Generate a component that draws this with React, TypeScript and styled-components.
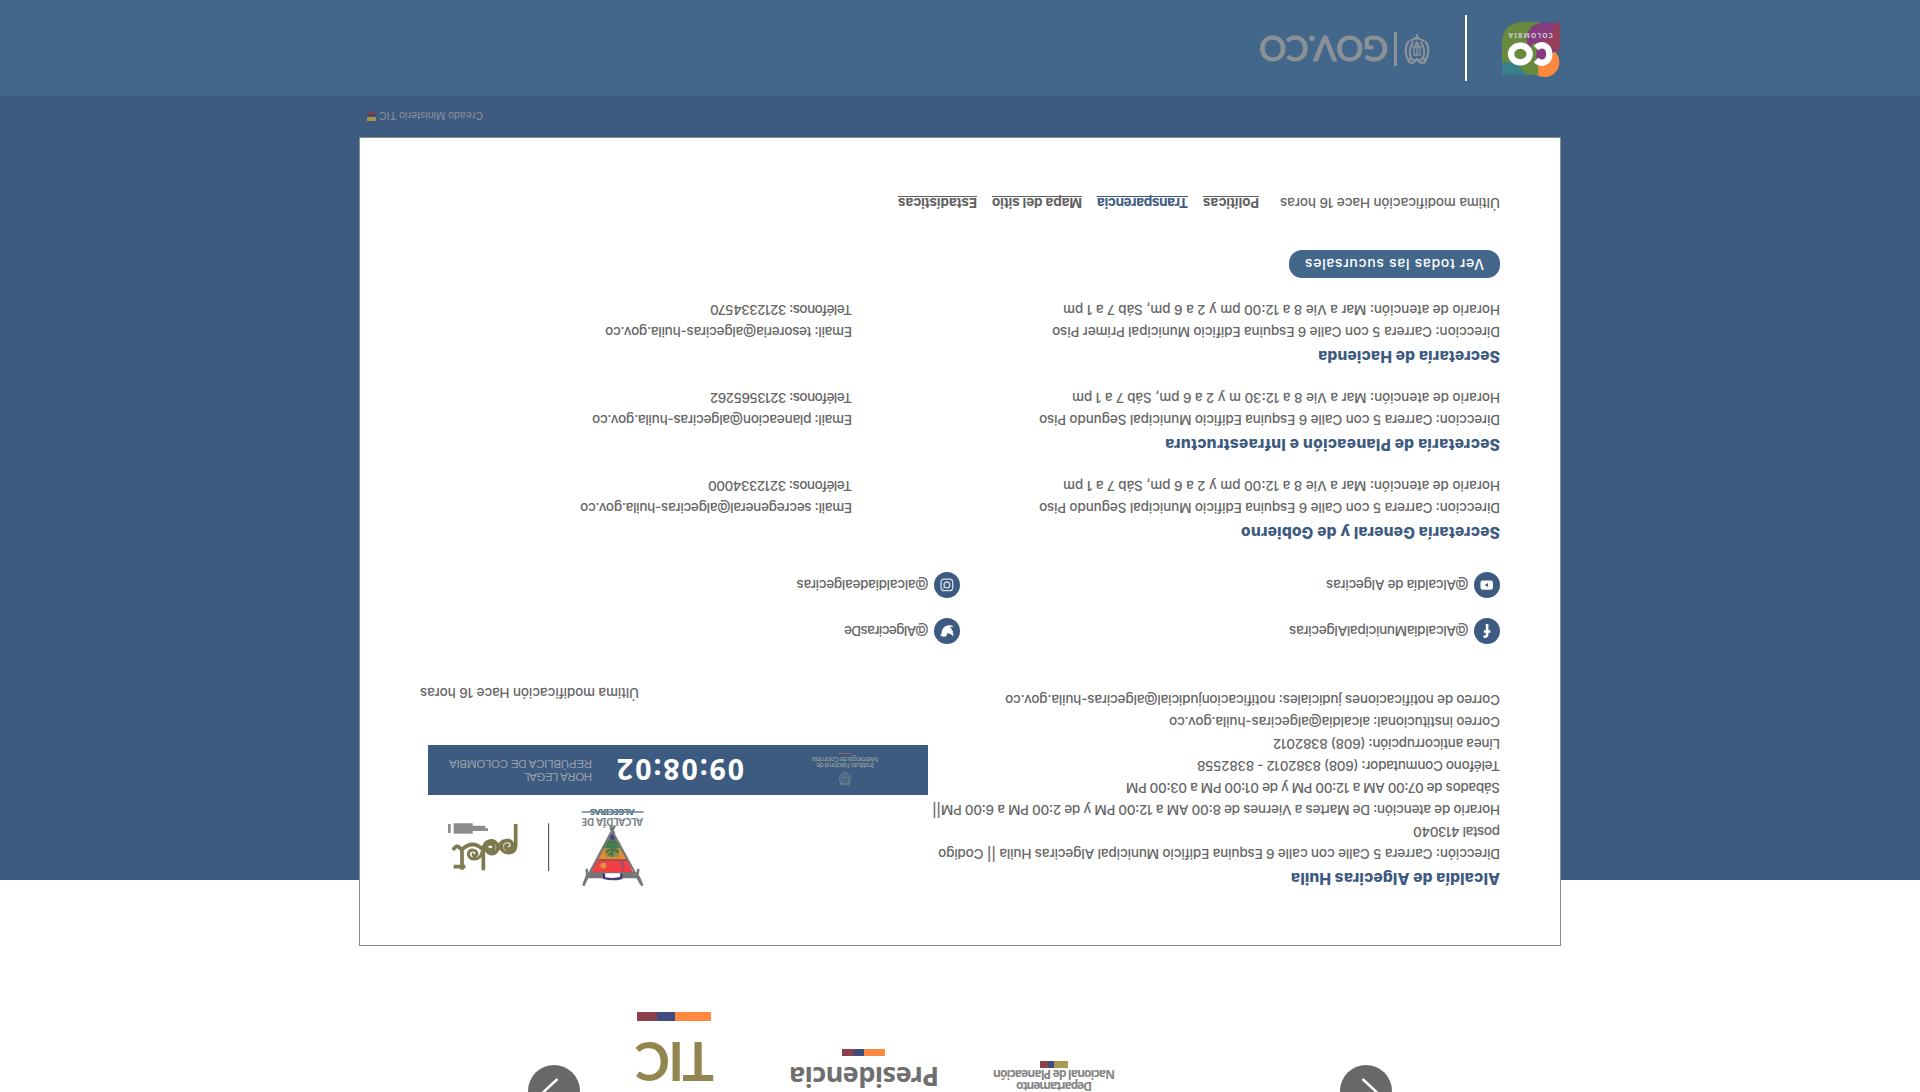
import React, { useLayoutEffect, useRef, useState } from "react";
import styled, { createGlobalStyle } from "styled-components";

const navy = "#3d5a80";
const steel = "#43678b";

const GlobalStyle = createGlobalStyle`
  body { margin: 0; background: #fff; }
  * { box-sizing: border-box; }
`;

const Page = styled.div`
  width: 1920px;
  height: 1092px;
  overflow: hidden;
  display: flex;
  flex-direction: column;
  background: #fff;
  color: #666;
  font: 500 13.5px/21px Inter, "Noto Sans", sans-serif;
  transform: rotate(180deg);
`;

/* ---------- text that keeps a fixed measure ---------- */

const FitSpan = styled.span`
  display: inline-block;
  white-space: nowrap;
  flex: none;
`;

function Fit({ w, children }: { w: number; children: string }) {
  const ref = useRef<HTMLSpanElement>(null);
  const [spacing, setSpacing] = useState(0);
  useLayoutEffect(() => {
    const el = ref.current;
    if (!el) return;
    el.style.letterSpacing = "0px";
    const natural = parseFloat(getComputedStyle(el).width);
    const s = (w - natural) / (children.length - 1);
    el.style.letterSpacing = s + "px";
    setSpacing(s);
  }, [w, children]);
  return (
    <FitSpan ref={ref} style={{ letterSpacing: spacing, marginRight: -spacing }}>
      {children}
    </FitSpan>
  );
}

/* ---------- partners carousel ---------- */

const Partners = styled.section`
  flex: none;
  height: 146px;
  display: flex;
  align-items: flex-start;
  padding-left: 528px;
`;

const ArrowButton = styled.button`
  flex: none;
  width: 52px;
  height: 52px;
  margin: -25px 0 0;
  padding: 0;
  border: 0;
  border-radius: 50%;
  background: #686868;
`;

const Partner = styled.div<{ $left: number; $w: number }>`
  flex: none;
  width: ${(p) => p.$w}px;
  margin-left: ${(p) => p.$left}px;
  display: flex;
  flex-direction: column;
  align-items: center;
`;

const DnpName = styled.div`
  font: 700 12px/12px "Noto Sans", sans-serif;
  color: #858585;
  text-align: center;
  height: 24px;
`;

const PresidenciaName = styled.div`
  font: 700 27px/29px "Noto Sans", sans-serif;
  color: #6f6f6f;
  height: 36px;
`;

const TicName = styled.div`
  font: 700 53px/60px Lato, sans-serif;
  color: #92854f;
  height: 71px;
`;

const Flag = styled.div<{ $w: number; $h: number; $first?: string }>`
  width: ${(p) => p.$w}px;
  height: ${(p) => p.$h}px;
  background: linear-gradient(
    90deg,
    ${(p) => p.$first ?? "#fe8840"} 49%,
    #404b80 49% 73%,
    #8a414c 73%
  );
`;

/* ---------- footer ---------- */

const FooterZone = styled.footer`
  flex: none;
  height: 850px;
  display: flex;
  flex-direction: column;
  align-items: center;
  background: linear-gradient(#fff 66px, ${navy} 66px);
`;

const Card = styled.div`
  width: 1202px;
  height: 809px;
  padding: 45px 60px 0;
  border: 1px solid #8b8b8b;
  background: #fff;
`;

const TopGrid = styled.div`
  display: grid;
  grid-template-columns: 572px 500px;
  align-items: start;
`;

const Info = styled.div`
  padding-top: 12px;
`;

const Title = styled.h3`
  margin: 0 0 2px;
  height: 22px;
  font-size: 15.5px;
  line-height: 20px;
  font-weight: 800;
  color: ${navy};
`;

const Line = styled.p`
  margin: 0;
  height: 22px;
`;

const Brands = styled.div`
  display: flex;
  gap: 10px;
  height: 100px;
  padding-left: 268px;
`;

const AlcaldiaSvg = styled.svg`
  flex: none;
  width: 90px;
  height: 100px;
`;

const PdetSvg = styled.svg`
  flex: none;
  width: 120px;
  height: 65px;
  margin-top: 20px;
`;

const LegalTime = styled.div`
  display: flex;
  align-items: center;
  height: 50px;
  margin-top: 5px;
  padding-left: 50px;
  background: ${navy};
`;

const Institute = styled.div`
  width: 66px;
  height: 32px;
  display: flex;
  flex-direction: column;
  align-items: center;
  font: 7px/6px "Noto Sans", sans-serif;
  color: #98a39c;
`;

const InstituteShield = styled.svg`
  width: 14px;
  height: 15px;
  margin-bottom: 3px;
  flex: none;
`;

const InstituteMark = styled.div`
  flex: none;
  width: 14px;
  height: 1px;
  margin-top: 2px;
  background: #8a6470;
`;

const Clock = styled.div`
  width: 127px;
  margin-left: 68px;
  font: 700 28.5px/34px "Noto Sans", sans-serif;
  color: #fff;
`;

const ClockLabel = styled.div`
  margin-left: 25px;
  font: 11.5px/13px "Liberation Sans", sans-serif;
  color: #9ba1aa;
  display: flex;
  flex-direction: column;
`;

const Updated = styled.p`
  margin: 42px 0 0 289px;
  height: 22px;
`;

const Socials = styled.div`
  display: grid;
  grid-template-columns: 540px auto;
  row-gap: 20px;
  margin: 37px 0 30px;
`;

const Social = styled.div`
  display: flex;
  align-items: center;
  gap: 5.5px;
  height: 26px;
`;

const SocialIcon = styled.svg`
  width: 26px;
  height: 26px;
`;

const Office = styled.section`
  margin-bottom: 20px;
`;

const OfficeGrid = styled.div`
  display: grid;
  grid-template-columns: 648px auto;
`;

const BranchesButton = styled.button`
  display: block;
  height: 28px;
  width: 211px;
  padding: 0 0 0 16px;
  border: 0;
  border-radius: 13px;
  background: ${steel};
  color: #fff;
  text-align: left;
  font: 500 14px/28px Inter, sans-serif;
`;

const Links = styled.div`
  display: flex;
  margin-top: 37px;
`;

const FooterLink = styled.a<{ $gap: number; $active?: boolean }>`
  margin-left: ${(p) => p.$gap}px;
  height: 17px;
  font-weight: 700;
  border-bottom: 1px solid currentColor;
  color: ${(p) => (p.$active ? navy : "#626262")};
`;

const Credit = styled.div`
  display: flex;
  align-items: center;
  width: 1202px;
  height: 41px;
  padding: 0 8px 0 0;
  justify-content: flex-end;
  gap: 3px;
  font: 10.5px/14px "Liberation Sans", sans-serif;
  color: #8d929a;
`;

/* ---------- government bar ---------- */

const GovBar = styled.div`
  flex: none;
  height: 96px;
  display: flex;
  align-items: center;
  padding-left: 360px;
  background: ${steel};
`;

const CoLogo = styled.svg`
  width: 58px;
  height: 55px;
  margin-bottom: 3px;
`;

const Rule = styled.div`
  width: 1.500px;
  height: 66px;
  margin: 0 35px;
  background: #fff;
`;

const GovShield = styled.svg`
  width: 26px;
  height: 31px;
  margin-bottom: 3px;
`;

const GovRule = styled.div`
  width: 3px;
  height: 34px;
  margin: 0 6.500px 3px 7px;
  background: #8c9197;
`;

const GovName = styled.div`
  font: 500 34px/40px Lato, sans-serif;
  -webkit-text-stroke: 1px #8c9197;
  color: #8c9197;
  padding-bottom: 3px;
`;

function Shield({ color }: { color: string }) {
  return (
    <g fill="none" stroke={color} strokeWidth="2.200">
      <path d="M6 3C1 8 0 18 5 24M20 3c5 5 6 15 1 21" />
      <path d="M8 5C5 10 5 17 9 23M18 5c3 5 3 12-1 18" />
      <path d="M10 10c0 6 0 9 3 13 3-4 3-7 3-13zM13 9v14M8 18h10" strokeWidth="1.400" />
      <path d="M4 4q4-4 7 0 2 3 4 0 3-4 7 0M6 24q7 5 14 0M10 27h6M13 27v4" />
      <path d="M3 6q5 1 8-2M23 6q-5 1-8-2M9 2l4 4 4-4" />
    </g>
  );
}

function Alcaldia() {
  return (
    <AlcaldiaSvg viewBox="0 0 270 300">
      <g transform="rotate(180 135 150)">
        <path d="M127 92 98 148H154Z" fill="#3f8150" />
        <path d="M127 92 114 124H138Z" fill="#69739a" />
        <path d="M98 145H154L172 181H80Z" fill="#df8c35" />
        <path d="M104 146H149L145 170H110Z" fill="#87904a" />
        <path d="M80 181H173L190 219H61Z" fill="#f33e43" />
        <path d="M61 217H192L196 233H55Z" fill="#747078" />
        <circle cx="128" cy="111" r="8" fill="#3b4583" />
        <path d="M104 133q23-18 46 0M108 158q19-22 37 0M127 136v36M115 166l24-20" stroke="#4c7346" strokeWidth="6" fill="none" />
        <circle cx="100" cy="197" r="11" fill="#f28a3f" stroke="#bb5440" strokeWidth="3" />
        <path d="M150 184q19 10 5 27" stroke="#865476" strokeWidth="5" fill="none" />
        <path d="M83 180H172" stroke="#873946" strokeWidth="4" />
        <path d="M121 76 133 101M135 76 42 251M121 84 213 252M50 221H206M47 231H207" stroke="#77777a" strokeWidth="7" fill="none" />
        <path d="M40 257l11-28M217 257l-12-28M50 207l3 26M205 207l-4 26" stroke="#77777a" strokeWidth="8" />
        <path d="M102 220v14q25 7 52 0v-14" fill="#fff" stroke="#403d76" strokeWidth="7" />
      </g>
      <text x="51" y="246" textLength="184" fontFamily="Noto Sans, sans-serif" fontSize="30" fontWeight="700" fill="#7e858b">ALCALDÍA DE</text>
      <text x="76" y="274" textLength="134" fontFamily="Noto Sans, sans-serif" fontSize="27" fontWeight="800" fill="#526f83">ALGECIRAS</text>
      <path d="M49 264h186" stroke="#6e8190" strokeWidth="4" />
    </AlcaldiaSvg>
  );
}

function Pdet() {
  return (
    <PdetSvg viewBox="0 0 360 195">
      <g transform="rotate(180 180 97.5)">
        <g fill="none" stroke="#7d7a50" strokeWidth="11">
          <path d="M227 27V90Q227 113 204 113C178 112 176 78 203 76 223 77 220 105 203 102 190 98 198 86 206 92" />
          <path d="M130 166V105C128 75 168 67 174 95 174 122 140 122 138 99 139 82 162 82 162 98 160 110 147 108 150 98" />
          <path d="M178 105q-3-17 13-28" />
          <path d="M39 105Q52 82 66 107V164M41 155H76M66 103Q100 74 127 103" />
          <path d="M127 108C122 139 86 138 85 117 88 99 112 104 111 117 107 128 94 121 101 115" strokeWidth="9" />
        </g>
      </g>
      <path d="M34 27v143" stroke="#3c3c3c" strokeWidth="3" />
      <g stroke="#8c8c8c" strokeWidth="8">
        <path d="M216 151H319M224 159H319M262 166H319M332 141v27" />
        <path d="M262 143H319" />
      </g>
    </PdetSvg>
  );
}

function SocialMark({ kind }: { kind: "facebook" | "twitter" | "youtube" | "instagram" }) {
  return (
    <SocialIcon viewBox="0 0 26 26">
      <circle cx="13" cy="13" r="13" fill={navy} />
      {kind === "facebook" && (
        <path fill="#fff" d="M11.6 20v-6.2H9.6v-2.6h2V9.4c0-2.2 1.2-3.3 3.2-3.3l1.7.1v2.3h-1.1c-1 0-1.2.5-1.2 1.2v1.5h2.2l-.3 2.6h-1.9V20z" />
      )}
      {kind === "twitter" && (
        <path fill="#fff" d="M20 8.4c-.5.3-1 .4-1.6.5.6-.4 1-.9 1.2-1.5-.5.3-1.1.5-1.8.7a2.900 2.900 0 0 0-4.900 2.600c-2.400-.1-4.500-1.200-5.900-3-.8 1.300-.4 3 .9 3.900-.5 0-.9-.2-1.300-.4 0 1.400 1 2.600 2.300 2.900-.4.1-.9.1-1.300 0 .4 1.200 1.500 2 2.700 2A5.900 5.900 0 0 1 6 17.400c5.200 3.300 12.600.4 12.500-7.500.6-.4 1.100-.9 1.500-1.500z" />
      )}
      {kind === "youtube" && (
        <>
          <rect x="7" y="8.300" width="12.500" height="9.300" rx="2.200" fill="#fff" />
          <path d="M12 11v4l3.400-2z" fill={navy} />
        </>
      )}
      {kind === "instagram" && (
        <g fill="none" stroke="#d3dae3" strokeWidth="1.300">
          <rect x="7.300" y="7.300" width="11.600" height="11.600" rx="3" />
          <circle cx="13.100" cy="13.100" r="2.900" />
          <path d="M16.200 9.800h.8" />
        </g>
      )}
    </SocialIcon>
  );
}

type Entry = [string, number];

const info: Entry[] = [
  ["Dirección: Carrera 5 Calle con calle 6 Esquina Edificio Municipal Algeciras Huila || Codigo", 562],
  ["postal 413040", 87],
  ["Horario de atención: De Martes a Viernes de 8:00 AM a 12:00 PM y de 2:00 PM a 6:00 PM||", 568],
  ["Sábados de 07:00 AM a 12:00 PM y de 01:00 PM a 03:00 PM", 374],
  ["Teléfono Conmutador: (608) 8382012 - 8382558", 303],
  ["Línea anticorrupción: (608) 8382012", 227],
  ["Correo institucional: alcaldia@algeciras-huila.gov.co", 331],
  ["Correo de notificaciones judiciales: notificacionjudicial@algeciras-huila.gov.co", 495],
];

const offices: { title: Entry; cells: Entry[] }[] = [
  {
    title: ["Secretaría General y de Gobierno", 259],
    cells: [
      ["Direccion: Carrera 5 con Calle 6 Esquina Edificio Municipal Segundo Piso", 461],
      ["Email: secregeneral@algeciras-huila.gov.co", 272],
      ["Horario de atención: Mar a Vie 8 a 12:00 pm y 2 a 6 pm, Sáb 7 a 1 pm", 437],
      ["Teléfonos: 3212334000", 144],
    ],
  },
  {
    title: ["Secretaría de Planeación e Infraestructura", 335],
    cells: [
      ["Direccion: Carrera 5 con Calle 6 Esquina Edificio Municipal Segundo Piso", 461],
      ["Email: planeacion@algeciras-huila.gov.co", 260],
      ["Horario de atención: Mar a Vie 8 a 12:30 m y 2 a 6 pm, Sáb 7 a 1 pm", 428],
      ["Teléfonos: 3213565262", 142],
    ],
  },
  {
    title: ["Secretaría de Hacienda", 182],
    cells: [
      ["Direccion: Carrera 5 con Calle 6 Esquina Edificio Municipal Primer Piso", 448],
      ["Email: tesoreria@algeciras-huila.gov.co", 247],
      ["Horario de atención: Mar a Vie 8 a 12:00 pm y 2 a 6 pm, Sáb 7 a 1 pm", 437],
      ["Teléfonos: 3212334570", 142],
    ],
  },
];

const Spacer = styled.div`
  flex: none;
  width: 55px;
`;

export default function App() {
  return (
    <>
      <GlobalStyle />
      <Page>
        <Partners>
          <ArrowButton aria-label="Anterior">
            <svg width="52" height="52" viewBox="0 0 52 52">
              <path d="M29.500 13 16 25.500 29.500 38" fill="none" stroke="#fff" strokeWidth="2.500" />
            </svg>
          </ArrowButton>
          <Partner $left={225} $w={122}>
            <DnpName>
              <Fit w={76}>Departamento</Fit>
              <br />
              <Fit w={122}>Nacional de Planeación</Fit>
            </DnpName>
            <Flag $w={28} $h={7} $first="#a89a50" />
          </Partner>
          <Partner $left={54} $w={150}>
            <PresidenciaName>
              <Fit w={150}>Presidencia</Fit>
            </PresidenciaName>
            <Flag $w={43} $h={7} />
          </Partner>
          <Partner $left={75} $w={79}>
            <TicName>
              <Fit w={79}>TIC</Fit>
            </TicName>
            <Flag $w={74} $h={9} />
          </Partner>
          <Spacer />
          <ArrowButton aria-label="Siguiente">
            <svg width="52" height="52" viewBox="0 0 52 52">
              <path d="M22.500 13 36 25.500 22.500 38" fill="none" stroke="#fff" strokeWidth="2.500" />
            </svg>
          </ArrowButton>
        </Partners>

        <FooterZone>
          <Card>
            <TopGrid>
              <Info>
                <Title>
                  <Fit w={209}>Alcaldía de Algeciras Huila</Fit>
                </Title>
                {info.map(([text, w]) => (
                  <Line key={text}>
                    <Fit w={w}>{text}</Fit>
                  </Line>
                ))}
              </Info>
              <div>
                <Brands>
                  <Alcaldia />
                  <Pdet />
                </Brands>
                <LegalTime>
                  <Institute>
                    <InstituteShield viewBox="0 0 26 31">
                      <Shield color="#64808c" />
                    </InstituteShield>
                    <Fit w={58}>Instituto Nacional de</Fit>
                    <Fit w={66}>Metrología de Colombia</Fit>
                    <InstituteMark />
                  </Institute>
                  <Clock>
                    <Fit w={127}>09:08:02</Fit>
                  </Clock>
                  <ClockLabel>
                    <div><Fit w={69}>HORA LEGAL</Fit></div>
                    <div><Fit w={143}>REPÚBLICA DE COLOMBIA</Fit></div>
                  </ClockLabel>
                </LegalTime>
                <Updated>
                  <Fit w={219}>Última modificación Hace 16 horas</Fit>
                </Updated>
              </div>
            </TopGrid>

            <Socials>
              <Social>
                <SocialMark kind="facebook" />
                <Fit w={180}>@AlcaldiaMunicipalAlgeciras</Fit>
              </Social>
              <Social>
                <SocialMark kind="twitter" />
                <Fit w={85}>@AlgecirasDe</Fit>
              </Social>
              <Social>
                <SocialMark kind="youtube" />
                <Fit w={143}>@Alcaldía de Algeciras</Fit>
              </Social>
              <Social>
                <SocialMark kind="instagram" />
                <Fit w={132}>@alcaldiadealgeciras</Fit>
              </Social>
            </Socials>

            {offices.map((o) => (
              <Office key={o.title[0]}>
                <Title>
                  <Fit w={o.title[1]}>{o.title[0]}</Fit>
                </Title>
                <OfficeGrid>
                  {o.cells.map(([text, w]) => (
                    <Line key={text}>
                      <Fit w={w}>{text}</Fit>
                    </Line>
                  ))}
                </OfficeGrid>
              </Office>
            ))}

            <BranchesButton>
              <Fit w={179}>Ver todas las sucursales</Fit>
            </BranchesButton>

            <Links>
              <Fit w={220}>Última modificación Hace 16 horas</Fit>
              <FooterLink $gap={21}><Fit w={56}>Políticas</Fit></FooterLink>
              <FooterLink $gap={15} $active><Fit w={91}>Transparencia</Fit></FooterLink>
              <FooterLink $gap={15}><Fit w={90}>Mapa del sitio</Fit></FooterLink>
              <FooterLink $gap={15}><Fit w={79}>Estadísticas</Fit></FooterLink>
            </Links>
          </Card>
          <Credit>
            <Fit w={104}>Creado Ministerio TIC</Fit>
            <svg width="9" height="9" viewBox="0 0 9 9">
              <path d="M0 0h9v4.500H0z" fill="#a89148" />
              <path d="M0 4.500h9v2H0z" fill="#3d3f6d" />
              <path d="M1 6.500h7V9H1z" fill="#853f51" />
            </svg>
          </Credit>
        </FooterZone>

        <GovBar>
          <CoLogo viewBox="30 40 174 165">
            <g transform="rotate(180 120 120)">
              <path d="M36 110h110v83H36z" fill="#37808c" />
              <path d="M36 155V96Q38 38 98 35H150V193H120Q100 192 84 158z" fill="#688a3d" />
              <circle cx="164" cy="156" r="44" fill="#fe8840" />
              <path d="M109 168 145 120V193Q122 190 109 168z" fill="#688a3d" />
              <path d="M210 37H158Q112 40 109 88l12 38q12 38 40 28l30-28 19-10z" fill="#863b80" />
              <path d="M210 37h-16q-4 40-34 56l40 30h10z" fill="#944058" />
              <path d="M125 100h14v60h-14z" fill="#688a3d" />
              <g fill="none" stroke="#fff" strokeWidth="19">
                <ellipse cx="91" cy="131" rx="28" ry="25" />
                <path d="M138 113C154 97 178 106 178 131S154 165 138 149" />
              </g>
            </g>
            <text x="52" y="172" textLength="133" fontFamily="Noto Sans, sans-serif" fontSize="20" fontWeight="700" fill="#cfc8cf">COLOMBIA</text>
          </CoLogo>
          <Rule />
          <GovShield viewBox="0 0 26 31">
            <Shield color="#8c9197" />
          </GovShield>
          <GovRule />
          <GovName>
            <Fit w={129}>GOV.CO</Fit>
          </GovName>
        </GovBar>
      </Page>
    </>
  );
}
